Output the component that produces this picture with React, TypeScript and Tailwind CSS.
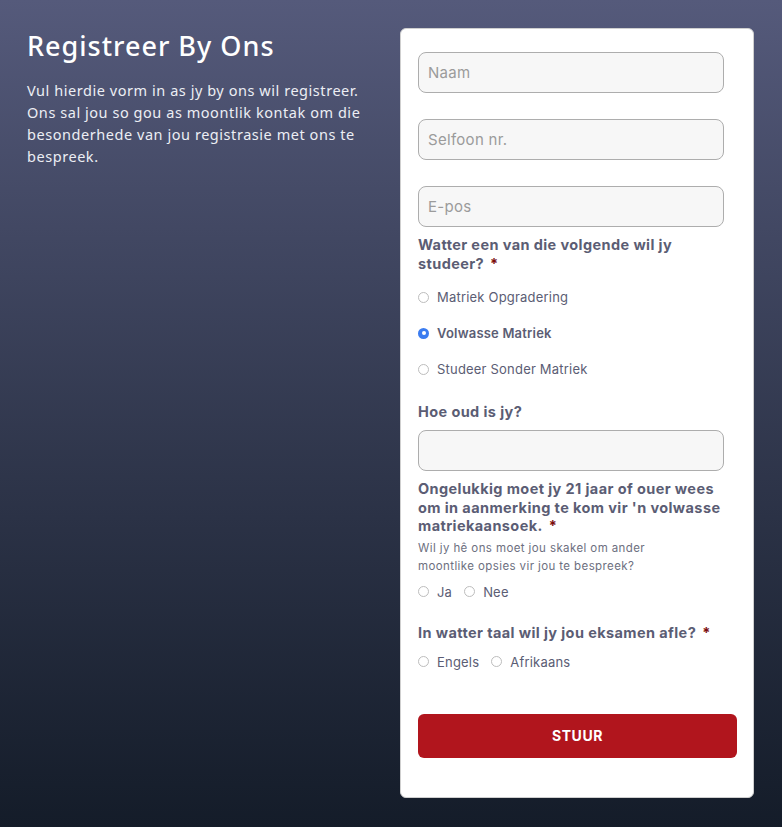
const formFont = { fontFamily: 'Inter, "Noto Sans", sans-serif' }

function Field({ placeholder }: { placeholder?: string }) {
  return (
    <input
      type="text"
      placeholder={placeholder}
      className="block h-[41px] w-[306px] rounded-lg border border-[#adadad] bg-[#f7f7f7] px-[9px] text-[15px] tracking-[0.3px] text-[#333] placeholder:text-[#9b9b9b] outline-none"
    />
  )
}

function Radio({ label, checked }: { label: string; checked?: boolean }) {
  return (
    <label className="flex items-center gap-[8px]">
      {checked ? (
        <span className="flex size-[11px] items-center justify-center rounded-full bg-[#3b7cf0]">
          <span className="size-[4px] rounded-full bg-white" />
        </span>
      ) : (
        <span className="size-[11px] rounded-full border border-[#bdbdbd] bg-white" />
      )}
      <span className={checked ? 'font-semibold text-[#5b5d74]' : 'text-[#5b5d74]'}>{label}</span>
    </label>
  )
}

function Star() {
  return <span className="ml-[6px] leading-none text-[#7b0b0b]">*</span>
}

export default function App() {
  return (
    <div className="min-h-[827px] w-full bg-gradient-to-b from-[#555a7b] to-[#141c29]">
      <div className="flex gap-[24px] pl-[27px] pt-[28px]">
        <div className="w-[349px] pt-[3px] text-white" style={{ fontFamily: '"Noto Sans", sans-serif' }}>
          <h1 className="text-[27px] font-medium leading-[30px] tracking-[1px]">Registreer By Ons</h1>
          <p className="mt-[18px] text-[14.5px] leading-[22px] tracking-[0.55px] text-[#eceef4]">
            Vul hierdie vorm in as jy by ons wil registreer. Ons sal jou so gou as moontlik kontak om die besonderhede
            van jou registrasie met ons te bespreek.
          </p>
        </div>
        <div
          className="mb-[30px] w-[354px] rounded-md border border-[#cfcfcf] bg-white pl-[17px] pr-[16px] pt-[23px] pb-[39px]"
          style={formFont}
        >
          <div className="flex flex-col gap-[26px]">
            <Field placeholder="Naam" />
            <Field placeholder="Selfoon nr." />
            <Field placeholder="E-pos" />
          </div>
          <div className="mt-[8px] text-[14.5px] font-bold leading-[19px] tracking-[0.4px] text-[#5b5d74]">
            Watter een van die volgende wil jy
            <br />
            studeer?
            <Star />
          </div>
          <div className="mt-[15px] flex flex-col gap-[18px] text-[13px] leading-[18px] tracking-[0.2px]">
            <Radio label="Matriek Opgradering" />
            <Radio label="Volwasse Matriek" checked />
            <Radio label="Studeer Sonder Matriek" />
          </div>
          <div className="mt-[24px] text-[14.5px] font-bold leading-[19px] tracking-[0.4px] text-[#5b5d74]">
            Hoe oud is jy?
          </div>
          <div className="mt-[9px]">
            <Field />
          </div>
          <div className="mt-[9px] w-[310px] text-[14.5px] font-bold leading-[18.5px] tracking-[0.4px] text-[#5b5d74]">
            Ongelukkig moet jy 21 jaar of ouer wees om in aanmerking te kom vir 'n volwasse matriekaansoek.
            <Star />
          </div>
          <div className="mt-[3px] w-[255px] text-[11.5px] leading-[18px] tracking-[0.4px] text-[#6d6f80]">
            Wil jy hê ons moet jou skakel om ander moontlike opsies vir jou te bespreek?
          </div>
          <div className="mt-[8px] flex gap-[12px] text-[13px] leading-[18px] tracking-[0.2px]">
            <Radio label="Ja" />
            <Radio label="Nee" />
          </div>
          <div className="mt-[22px] text-[14.5px] font-bold leading-[19px] tracking-[0.4px] text-[#5b5d74]">
            In watter taal wil jy jou eksamen afle?
            <Star />
          </div>
          <div className="mt-[11px] flex gap-[12px] text-[13px] leading-[18px] tracking-[0.2px]">
            <Radio label="Engels" />
            <Radio label="Afrikaans" />
          </div>
          <button
            type="button"
            className="mt-[43px] h-[44px] w-[319px] rounded-md bg-[#b1151d] text-[14px] font-bold tracking-[0.6px] text-white"
          >
            STUUR
          </button>
        </div>
      </div>
    </div>
  )
}
